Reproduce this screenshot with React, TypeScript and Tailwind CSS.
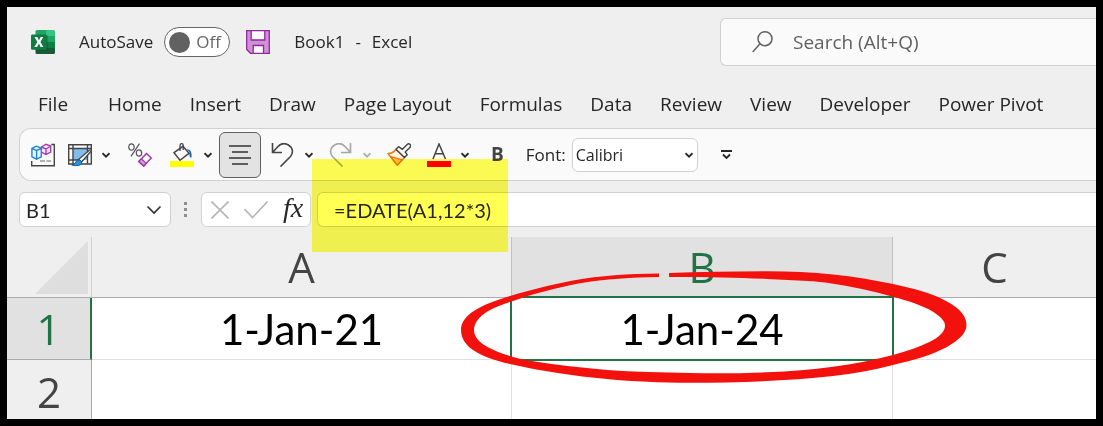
import type { ReactNode } from "react";

const tabs = [
  "Home", "Insert", "Draw", "Page Layout", "Formulas", "Data",
  "Review", "View", "Developer", "Power Pivot",
];

function Chevron({ className = "text-[#262626]" }: { className?: string }) {
  return (
    <svg className={`h-2 w-2 shrink-0 ${className}`} viewBox="0 0 8 8" fill="none" stroke="currentColor" strokeWidth="1.8">
      <path d="M0.5 2.2 4 5.7 7.5 2.2" />
    </svg>
  );
}

function ExcelLogo() {
  return (
    <svg className="h-6 w-6 shrink-0" viewBox="0 0 24 24" aria-label="Excel">
      <path d="M6 0h9v6H4.500V1.500Q4.500 0 6 0Z" fill="#21a366" />
      <path d="M15 0h7.500Q24 0 24 1.500V6h-9Z" fill="#33c481" />
      <path d="M4.500 6H15v6H4.500Z" fill="#107c41" />
      <path d="M15 6h9v6h-9Z" fill="#21a366" />
      <path d="M4.500 12H15v6H4.500Z" fill="#185c37" />
      <path d="M15 12h9v6h-9Z" fill="#107c41" />
      <path d="M4.500 18H24v4.500Q24 24 22.500 24H6Q4.500 24 4.500 22.500Z" fill="#185c37" />
      <path d="M4.500 5H15.500q1.200 0 1.200 1.200V19q0 1.500-1.500 1.500H4.500Z" fill="#0b4a29" opacity=".45" />
      <rect y="4.500" width="15.500" height="15.200" rx="1.200" fill="#107c41" />
      <path d="M3.500 7h2.800L8 10.300 9.700 7h2.600L9.400 12l3 5H9.600L7.900 13.600 6.100 17H3.300l3.100-5Z" fill="#fff" />
    </svg>
  );
}

function SaveIcon() {
  return (
    <svg className="h-6 w-6" viewBox="0 0 24 24" stroke="#8f2b9c" strokeWidth="1.3">
      <path d="M.7.7h22.600v22.600H4.500L.7 19.500Z" fill="#d08fd6" />
      <path d="M5.200.7h13.600v9.300H5.200Z" fill="#fafafa" />
      <path d="M7.200 23.300v-7.800h10.300v7.800Z" fill="#fafafa" />
    </svg>
  );
}

function CubesIcon() {
  return (
    <svg className="h-6 w-6" viewBox="0 0 24 24" fill="none" strokeWidth="1.400">
      <path d="M.7 18v4.800h22.600V1.500h-3" stroke="#444" />
      <path d="M9 18h5m1.500 0H20" stroke="#666" strokeWidth="1" />
      <path d="m10.300 4 4.700-2.700L19.700 3v6L15 11.500 10.300 9Zm0 0L15 6l4.700-3M15 6v5.500" stroke="#a43db0" fill="#f6e3f8" />
      <path d="M.9 5.300 5.600 3.200l4.700 2.100v8.500l-4.700 2.400-4.700-2.400Zm0 0 4.700 2.200 4.700-2.200M5.600 7.500v8.500" stroke="#1f86cf" fill="#e8f4fd" />
    </svg>
  );
}

function FormatTableIcon() {
  return (
    <svg className="h-6 w-6" viewBox="0 0 24 24" fill="none">
      <path d="M5 5.500h14.500V17H5Z" fill="#83bdeb" />
      <path d="M.7 1.700h22.600V21H.7ZM.7 5.500h22.600M5 1.700V21M19.500 1.700V21M.7 17H12" stroke="#444" strokeWidth="1.400" />
      <path d="m10.500 16.500 10.800-9.300q1.800-1 2 .8L13.500 19Z" fill="#fafafa" stroke="#444" strokeWidth="1.300" />
      <path d="M3.800 22q3.200-.3 3.900-2.800 1-2.700 3.600-2.200 3 .8 2.300 3.300-1.400 3.500-9.800 1.700Z" fill="#2f8fdb" stroke="#0f5fa8" />
    </svg>
  );
}

function ClearFormatIcon() {
  return (
    <svg className="h-6 w-6" viewBox="0 0 24 24" fill="none">
      <g stroke="#555" strokeWidth="1.200">
        <ellipse cx="3.500" cy="4" rx="2.700" ry="3.200" />
        <ellipse cx="11" cy="10" rx="2.700" ry="3.200" />
        <path d="M11.500.7 3 13.300" />
      </g>
      <path d="m10.800 18.500 7.700-8 4.800 4.500-7.600 8Z" fill="#fafafa" stroke="#a033ad" strokeWidth="1.500" />
      <path d="m10.800 18.500 2.600-2.600 4.800 4.500-2.500 2.600Z" fill="#d49add" stroke="#a033ad" strokeWidth="1.300" />
    </svg>
  );
}

function FillIcon() {
  return (
    <svg className="h-6 w-6" viewBox="0 0 24 24" fill="none">
      <path d="M4 9.700 13 3.300l6 7-9 7Z" fill="#fafafa" stroke="#444" strokeWidth="1.500" />
      <path d="M10 8V2.500Q10.200.7 11.700.7t1.500 1.600V7" stroke="#444" strokeWidth="1.300" />
      <path d="M16.500 6.200q5.800-.5 5 8.300-2 .2-2-1.500V9Z" fill="#1264ad" />
      <path d="M0 18h24v6H0Z" fill="#ff0" />
    </svg>
  );
}

function UndoIcon({ flipped = false }: { flipped?: boolean }) {
  return (
    <svg className={flipped ? "h-6 w-6 text-[#a6a6a6]" : "h-6 w-6 text-[#444]"} viewBox="0 0 24 24" fill="none" stroke="currentColor" strokeWidth="1.600">
      {flipped ? (
        <path d="M21.500 0v9.500h-9.500M21 9 16.500 4C13.500.5 9.500-.2 6 1.800 1.300 4.500.2 9.500 3.500 13.500L13.500 23.500" />
      ) : (
        <path d="M1.500 0v9.500H11M2 9 6.500 4C9.500.5 13.500-.2 17 1.800 21.700 4.500 22.800 9.500 19.500 13.500L9.500 23.500" />
      )}
    </svg>
  );
}

function PainterIcon() {
  return (
    <svg className="h-6 w-6" viewBox="0 0 24 24" fill="none" strokeLinejoin="round">
      <path d="M1 10.500Q6 10.500 9 6.300l8.500 8.200-7.200 7.700Z" fill="#fff3e3" stroke="#e27914" strokeWidth="1.500" />
      <path d="m3.500 13.500 11.500 3.200-4.700 5.200Z" fill="#f8bd78" stroke="#e27914" strokeWidth="1.200" />
      <path d="m9 6.300 2.600-2.600 3.800 2.600 4.800-4.900q1.700-1.200 2.900 0t0 2.900L18.200 9l2 2.700-2.700 2.800Z" fill="#fafafa" stroke="#444" strokeWidth="1.400" />
    </svg>
  );
}

function FontColorIcon() {
  return (
    <svg className="h-6 w-6" viewBox="0 0 24 24" fill="none">
      <path d="M6 16 12 1l6.500 15M8.200 10.800h8" stroke="#444" strokeWidth="1.500" />
      <path d="M0 18h24v6H0Z" fill="red" />
    </svg>
  );
}

function ToolButton({ label, children }: { label: string; children: ReactNode }) {
  return (
    <button type="button" aria-label={label} className="flex shrink-0 items-center gap-[10px]">
      {children}
    </button>
  );
}

function TitleBar() {
  return (
    <header className="flex items-center pt-[11px] pl-6 text-[17px] text-[#262626]">
      <ExcelLogo />
      <span id="autosave" className="ml-6">AutoSave</span>
      <button
        type="button"
        role="switch"
        aria-checked="false"
        aria-labelledby="autosave"
        className="ml-[11px] flex h-[30px] w-[66px] shrink-0 items-center gap-[6px] rounded-full border border-[#666] bg-white pl-1 text-[17px] text-[#666]"
      >
        <span className="h-[21px] w-[21px] rounded-full bg-[#616161]" />
        Off
      </button>
      <button type="button" aria-label="Save" className="ml-4 shrink-0"><SaveIcon /></button>
      <h1 className="ml-6 flex shrink-0 gap-[11px]"><span>Book1</span><span>-</span><span>Excel</span></h1>
      <label className="ml-auto flex h-12 w-[376px] shrink-0 items-center gap-[17px] rounded-l-md border border-r-0 border-[#d1d1d1] bg-[#fafafa] pl-[31px]">
        <svg className="h-6 w-6 shrink-0" viewBox="0 0 24 24" fill="none" stroke="#616161" strokeWidth="1.500" aria-label="Search">
          <circle cx="13" cy="8.700" r="7" />
          <path d="M8 13.700.7 22" />
        </svg>
        <input aria-label="Search" placeholder="Search (Alt+Q)" className="min-w-0 flex-1 bg-transparent text-[19px] outline-none placeholder:text-[#616161]" />
      </label>
    </header>
  );
}

function QuickAccess() {
  return (
    <div className="mt-[6px] ml-3 flex h-[53px] items-center rounded-l-xl border border-r-0 border-[#d1d1d1] bg-[#fafafa] pl-[11px]">
      <ToolButton label="Data types"><CubesIcon /></ToolButton>
      <div className="ml-[13px] flex items-center gap-[18px]">
        <ToolButton label="Format as table"><FormatTableIcon /><Chevron /></ToolButton>
        <ToolButton label="Clear formats"><ClearFormatIcon /></ToolButton>
        <ToolButton label="Fill color"><FillIcon /><Chevron /></ToolButton>
      </div>
      <button type="button" aria-label="Center" aria-pressed="true" className="mr-[10px] ml-[7px] flex h-[46px] w-[42px] shrink-0 items-center justify-center rounded-md border border-[#616161] bg-[#e3e3e3]">
        <svg className="h-5 w-[22px]" viewBox="0 0 22 20" stroke="#333" strokeWidth="1.400">
          <path d="M0 1h22M3 7h16M0 13h22M3 19h16" />
        </svg>
      </button>
      <div className="flex items-center gap-4">
        <ToolButton label="Undo"><UndoIcon /><Chevron /></ToolButton>
        <ToolButton label="Redo"><UndoIcon flipped /><Chevron className="text-[#b0b0b0]" /></ToolButton>
        <ToolButton label="Format painter"><PainterIcon /></ToolButton>
        <ToolButton label="Font color"><FontColorIcon /><Chevron /></ToolButton>
      </div>
      <button type="button" className="ml-[22px] text-[19px] font-bold text-[#444]">B</button>
      <label htmlFor="font" className="ml-[22px] text-[17px] text-[#262626]">Font:</label>
      <div className="relative ml-[6px] shrink-0">
        <select id="font" className="h-[34px] w-[126px] appearance-none rounded-md border border-[#d1d1d1] bg-white pl-[3px] text-base text-[#262626]">
          <option>Calibri</option>
        </select>
        <span className="pointer-events-none absolute top-[13px] right-[5px]"><Chevron /></span>
      </div>
      <button type="button" aria-label="Customize toolbar" className="ml-[23px]">
        <svg className="h-[10px] w-[11px]" viewBox="0 0 11 10" fill="none" stroke="#262626" strokeWidth="1.800">
          <path d="M0 1h11M2 4.500 5.500 8 9 4.500" />
        </svg>
      </button>
    </div>
  );
}

function FormulaBar() {
  return (
    <div className="mt-[11px] ml-3 flex h-[35px] items-stretch font-[Lato,sans-serif]">
      <div className="flex w-[152px] shrink-0 items-center rounded-md border border-[#d1d1d1] bg-white pr-2 pl-[6px]">
        <input aria-label="Name box" defaultValue="B1" className="min-w-0 flex-1 bg-transparent text-xl text-[#262626] outline-none" />
        <button type="button" aria-label="Open name list">
          <svg className="h-4 w-4" viewBox="0 0 16 16" fill="none" stroke="#333" strokeWidth="1.700">
            <path d="m1.500 4.500 6.500 6.500 6.500-6.500" />
          </svg>
        </button>
      </div>
      <svg className="mx-[13px] w-1 shrink-0" viewBox="0 0 4 35" fill="#8f8f8f">
        <path d="M0 10h3v3H0ZM0 16h3v3H0ZM0 22h3v3H0Z" />
      </svg>
      <div className="flex w-[110px] shrink-0 items-center rounded-md border border-[#d1d1d1] bg-white pl-[9px]">
        <button type="button" aria-label="Cancel">
          <svg className="h-[18px] w-[18px]" viewBox="0 0 18 18" stroke="#b5b5b5" strokeWidth="1.600"><path d="m.5.500 17 17m0-17-17 17" /></svg>
        </button>
        <button type="button" aria-label="Enter" className="ml-[15px]">
          <svg className="h-[18px] w-6" viewBox="0 0 24 18" fill="none" stroke="#b5b5b5" strokeWidth="1.600"><path d="m.5 8 8 8.500L23.500.5" /></svg>
        </button>
        <button type="button" className="ml-[15px] pb-1 font-['Liberation_Serif',serif] text-[28px] leading-7 text-[#262626] italic">fx</button>
      </div>
      <div className="relative ml-[6px] flex-1">
        <input
          aria-label="Formula"
          defaultValue="=EDATE(A1,12*3)"
          className="h-full w-full rounded-l-md border border-r-0 border-[#d1d1d1] bg-white pl-4 text-xl text-[#262626] outline-none"
        />
        <div className="pointer-events-none absolute -top-[33px] -left-[5px] z-10 h-[93px] w-[196px] bg-[#ffff54] mix-blend-multiply" />
      </div>
    </div>
  );
}

function RedCircle() {
  return (
    <svg className="pointer-events-none absolute -top-[38px] -left-[62px] z-20 h-[130px] w-[530px] max-w-none" viewBox="450 260 530 130" fill="#f3110d">
      <path d="M659 273.500C627 274 601 275.500 573 280.500C550 285 530 290 510 296C480 305 461 315 461 330C461 347 480 357 510 364C541 371 574 376 607 379C634 381.500 660 382.700 690 382.700C738 382.700 787 381 833 376C854 373.500 874 370 893 365C914 360 932 355 947 347C959 340 966.500 333 966.500 325C966.500 313 954 304 937 296.500C924 291 909 287.500 893 284C874 280 854 276.700 833 274.500C812 272 790 271.300 767 271.300C734 271.300 700 272 669 273L669 277C700 276.800 736 277.500 767 279C788 280 808 280.500 827 282.700C850 286 872 291 893 296.700C908 301 922 305 933 311.700C941 317 945 321 945 325.700C945 332 939 337 930 341.700C919 347 907 351 893 355C874 360 854 364 833 366.700C812 369.500 790 371.500 767 372.300C742 373.300 715 373.500 690 373C662 372.500 634 372 607 370C580 367.500 554 364.500 530 360.700C513 358 498 352.500 487 346.700C478 341.500 474 336 474 330C474 323 479 317 487 311.700C494 307.500 502 304.500 510 302C534 293.500 556 288 580 283.300C605 279 632 277.300 659 277Z" />
    </svg>
  );
}

function Sheet() {
  return (
    <table className="mt-[10px] w-full table-fixed border-separate border-spacing-0 text-center text-[42px] leading-none">
      <colgroup>
        <col className="w-[85px]" />
        <col className="w-[420px]" />
        <col className="w-[381px]" />
        <col />
      </colgroup>
      <thead>
        <tr className="h-[61px] text-[#444]">
          <th className="border-r border-b border-r-[#d0d0d0] border-b-[#ababab] p-0 font-normal">
            <svg className="ml-auto mr-[3px] h-[53px] w-[53px]" viewBox="0 0 53 53" fill="#dedede" aria-label="Select all"><path d="M53 0v53H0Z" /></svg>
          </th>
          <th className="border-r border-b border-r-[#c0c0c0] border-b-[#ababab] p-0 font-normal">A</th>
          <th className="border-r border-b border-r-[#c0c0c0] border-b-[#ababab] bg-[#e1e1e1] p-0 font-normal text-[#217346]">B</th>
          <th className="border-b border-[#ababab] p-0 font-normal">C</th>
        </tr>
      </thead>
      <tbody className="font-[Lato,sans-serif] text-black">
        <tr className="h-[62px]">
          <th className="border-r-2 border-b border-r-[#217346] border-b-[#ababab] bg-[#e1e1e1] p-0 font-['Open_Sans',sans-serif] font-normal text-[#217346]">1</th>
          <td className="border-r border-b border-[#e0e0e0] bg-white p-0">1-Jan-21</td>
          <td className="relative border-r border-b border-[#e0e0e0] bg-white p-0">
            1-Jan-24
            <div className="pointer-events-none absolute -inset-0.5 z-10 border-2 border-[#217346]" />
            <RedCircle />
          </td>
          <td className="border-b border-[#e0e0e0] bg-white p-0" />
        </tr>
        <tr className="h-[59px]">
          <th className="border-r border-[#ababab] p-0 pt-1 font-['Open_Sans',sans-serif] font-normal text-[#444]">2</th>
          <td className="border-r border-[#e0e0e0] bg-white p-0" />
          <td className="border-r border-[#e0e0e0] bg-white p-0" />
          <td className="bg-white p-0" />
        </tr>
      </tbody>
    </table>
  );
}

export default function App() {
  return (
    <div className="min-h-screen bg-black p-[7px] font-['Open_Sans',sans-serif]">
      <main className="overflow-hidden bg-[#efefef]">
        <TitleBar />
        <nav className="mt-5 flex h-9 items-center gap-7 pl-[31px] text-[19px] whitespace-nowrap text-[#262626]">
          <a href="#file" className="mr-3">File</a>
          {tabs.map((tab) => (
            <a key={tab} href={`#${tab.toLowerCase().replace(" ", "-")}`}>{tab}</a>
          ))}
        </nav>
        <QuickAccess />
        <FormulaBar />
        <Sheet />
      </main>
    </div>
  );
}
